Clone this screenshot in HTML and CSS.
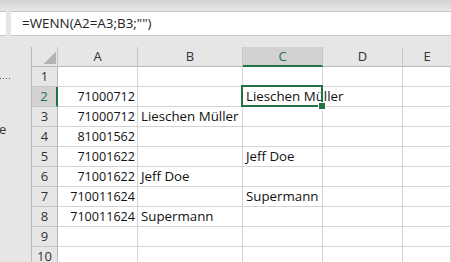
FILE: index.html
```html
<!DOCTYPE html>
<html lang="de">
<head>
  <meta charset="UTF-8" />
  <title>Tabelle</title>
  <link rel="stylesheet" href="styles.css">
</head>
<body>

  <div class="topbar"></div>

  <div class="formula-row">
    <div class="name-box"></div>
    <div class="formula-bar">=WENN(A2=A3;B3;"")</div>
  </div>

  <div class="workspace">
    <div class="side-pane">
      <div class="pane-dots"></div>
      <div class="pane-letter">e</div>
    </div>

    <div class="sheet">
      <div class="corner"><span class="corner-mark"></span></div>
      <div class="col-head">A</div>
      <div class="col-head">B</div>
      <div class="col-head active">C</div>
      <div class="col-head">D</div>
      <div class="col-head last">E</div>

      <div class="row-head">1</div>
      <div class="cell"></div><div class="cell"></div><div class="cell"></div><div class="cell"></div><div class="cell"></div>

      <div class="row-head active">2</div>
      <div class="cell num">71000712</div><div class="cell"></div><div class="cell selected">Lieschen Müller</div><div class="cell"></div><div class="cell"></div>

      <div class="row-head">3</div>
      <div class="cell num">71000712</div><div class="cell">Lieschen Müller</div><div class="cell"></div><div class="cell"></div><div class="cell"></div>

      <div class="row-head">4</div>
      <div class="cell num">81001562</div><div class="cell"></div><div class="cell"></div><div class="cell"></div><div class="cell"></div>

      <div class="row-head">5</div>
      <div class="cell num">71001622</div><div class="cell"></div><div class="cell">Jeff Doe</div><div class="cell"></div><div class="cell"></div>

      <div class="row-head">6</div>
      <div class="cell num">71001622</div><div class="cell">Jeff Doe</div><div class="cell"></div><div class="cell"></div><div class="cell"></div>

      <div class="row-head">7</div>
      <div class="cell num">710011624</div><div class="cell"></div><div class="cell">Supermann</div><div class="cell"></div><div class="cell"></div>

      <div class="row-head">8</div>
      <div class="cell num">710011624</div><div class="cell">Supermann</div><div class="cell"></div><div class="cell"></div><div class="cell"></div>

      <div class="row-head">9</div>
      <div class="cell"></div><div class="cell"></div><div class="cell"></div><div class="cell"></div><div class="cell"></div>

      <div class="row-head">10</div>
      <div class="cell"></div><div class="cell"></div><div class="cell"></div><div class="cell"></div><div class="cell"></div>
    </div>
  </div>

</body>
</html>
```

FILE: styles.css
```css
* {
  box-sizing: border-box;
}

body {
  margin: 0;
  width: 451px;
  height: 262px;
  overflow: hidden;
  background: #e6e6e6;
  font-family: 'Open Sans', 'Noto Sans', sans-serif;
  color: #1a1a1a;
}

.topbar {
  height: 11px;
  background: linear-gradient(#d3d3d3, #e8e8e8);
}

.formula-row {
  display: flex;
  gap: 5px;
  height: 25px;
}

.name-box,
.formula-bar {
  background: #fff;
  border-top: 1px solid #c6c6c6;
  border-bottom: 1px solid #c6c6c6;
}

.name-box {
  width: 6px;
}

.formula-bar {
  flex: 1;
  padding-left: 11px;
  font-size: 13.4px;
  line-height: 22px;
  color: #222;
}

.workspace {
  display: flex;
  margin-top: 11px;
}

.side-pane {
  width: 31px;
}

.pane-dots {
  margin-top: 31px;
  width: 12px;
  height: 1px;
  background: repeating-linear-gradient(to right, #4a5a78 0 1px, transparent 1px 3px);
}

.pane-letter {
  margin-top: 41px;
  margin-left: -1px;
  font-size: 13px;
  color: #333;
}

.sheet {
  flex: 1;
  display: grid;
  grid-template-columns: 27px 80px 105px 80px 80px 1fr;
  grid-auto-rows: 20px;
  background: #fff;
  font-size: 13px;
}

.corner,
.col-head,
.row-head {
  background: #e6e6e6;
  color: #333;
  text-align: center;
}

.corner {
  position: relative;
  border-left: 1px solid #b9b9b9;
  border-right: 1px solid #c4c4c4;
  border-bottom: 1px solid #b9b9b9;
}

.corner-mark {
  position: absolute;
  right: 1px;
  bottom: 2px;
  width: 13px;
  height: 13px;
  background: linear-gradient(to bottom right, transparent 50%, #b4b4b4 50%);
}

.col-head {
  line-height: 18px;
  border-right: 1px solid #c4c4c4;
  border-bottom: 1px solid #b9b9b9;
}

.col-head.last {
  border-right: none;
}

.col-head.active {
  background: #d2d2d2;
  color: #217346;
  border-bottom: 2px solid #217346;
}

.row-head {
  line-height: 19px;
  border-left: 1px solid #b9b9b9;
  border-right: 1px solid #b9b9b9;
  border-bottom: 1px solid #c6c6c6;
}

.row-head.active {
  background: #d2d2d2;
  color: #217346;
  border-right: 2px solid #217346;
}

.cell {
  position: relative;
  padding: 0 3px;
  font-size: 13.3px;
  line-height: 19px;
  white-space: nowrap;
  color: #111;
  border-right: 1px solid #d4d4d4;
  border-bottom: 1px solid #d4d4d4;
}

.cell.num {
  text-align: right;
  padding-right: 2px;
  font-size: 12.6px;
}

.cell.selected::after {
  content: '';
  position: absolute;
  top: -2px;
  left: -2px;
  right: -1px;
  bottom: -1px;
  border: 2px solid #217346;
  z-index: 1;
}

.cell.selected::before {
  content: '';
  position: absolute;
  right: -4px;
  bottom: -4px;
  width: 6px;
  height: 6px;
  background: #217346;
  border: 1px solid #fff;
  z-index: 2;
}
```
